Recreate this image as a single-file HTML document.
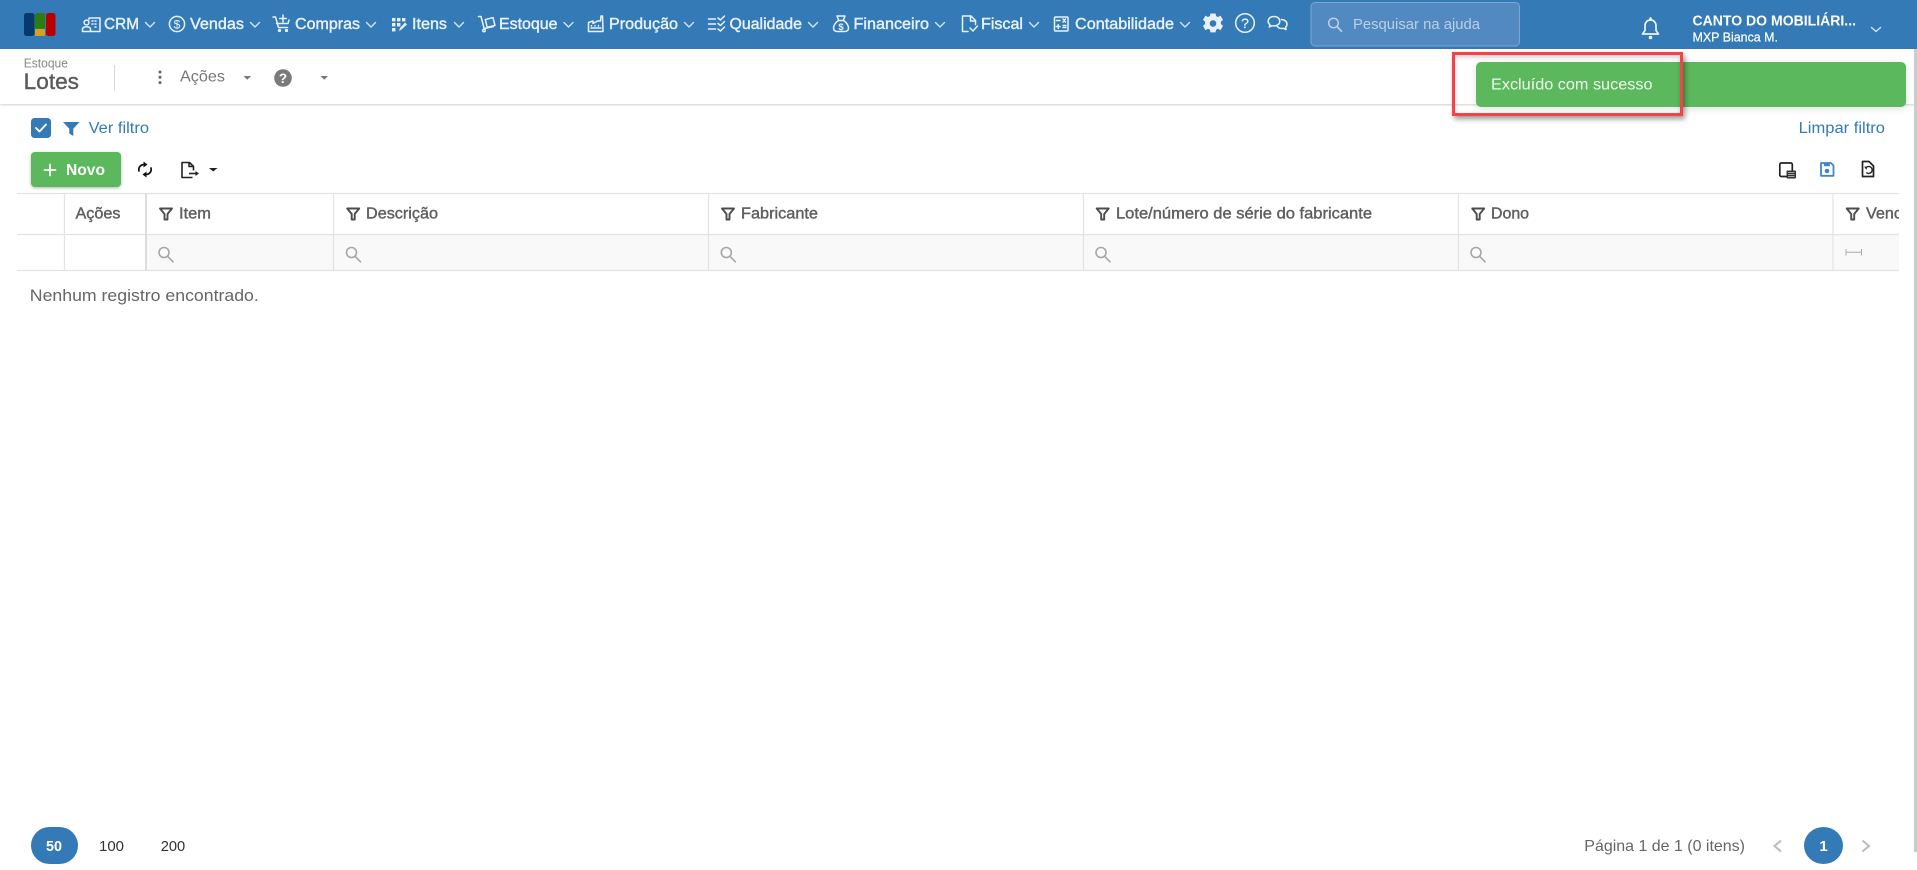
<!DOCTYPE html>
<html lang="pt-BR"><head><meta charset="utf-8"><title>Lotes</title>
<style>
html,body{margin:0;padding:0;width:1917px;height:870px;overflow:hidden;background:#fff}
body{position:relative;font-family:"Liberation Sans",Arial,sans-serif}
.hd{position:absolute;left:0;top:0;width:1917px;height:49px;background:#337ab7;box-shadow:0 1px 3px rgba(0,0,0,.35)}
.sub{position:absolute;left:0;top:49px;width:1917px;height:55px;background:#fff;box-shadow:0 1px 2px rgba(0,0,0,.18)}
.sb{position:absolute;left:1914px;top:49px;width:3px;height:803px;background:#ccc}
svg.m{position:absolute;left:0;top:0}
.toast{position:absolute;left:1476px;top:62px;width:430px;height:45px;border-radius:5px;background:#5cb85c;box-shadow:0 2px 8px rgba(0,0,0,.12)}
.red{position:absolute;left:1452px;top:52px;width:225px;height:58px;border:3px solid #f44246;box-shadow:2px 3px 5px rgba(0,0,0,.4),inset 0 2px 4px rgba(0,0,0,.2)}
.novo{position:absolute;left:31px;top:152px;width:90px;height:35px;border-radius:4px;background:#5cb85c;box-shadow:0 1px 3px rgba(0,0,0,.3)}
.pill{position:absolute;left:31px;top:827px;width:47px;height:37px;border-radius:18.5px;background:#337ab7}
.circ{position:absolute;left:1804px;top:827px;width:39px;height:37px;border-radius:50%;background:#337ab7}
text{font-family:"Liberation Sans",Arial,sans-serif}
.n{font-size:15.5px;fill:#e9f1f8;stroke:#e9f1f8;stroke-width:.4}
.i{fill:none;stroke:#e9f1f8;stroke-width:1.5;stroke-linecap:round;stroke-linejoin:round}
.c{fill:none;stroke:#d7e5f1;stroke-width:1.4;stroke-linecap:round;stroke-linejoin:round}
.th{font-size:15.5px;fill:#5f5f5f;stroke:#5f5f5f;stroke-width:.4}
.f{fill:none;stroke:#4d4d4d;stroke-width:1.9;stroke-linejoin:round;stroke-linecap:round}
.s{fill:none;stroke:#a6a6a6;stroke-width:1.6;stroke-linecap:round}
.l{stroke:#e3e3e3;stroke-width:1.2}
</style></head><body>
<div class="hd"></div>
<div class="sub"></div>
<div class="sb"></div>
<div class="novo"></div>
<div class="pill"></div>
<div class="circ"></div>
<svg class="m" width="1917" height="870" viewBox="0 0 1917 870">
<!-- logo -->
<rect x="24" y="13" width="10.5" height="23" rx="2.5" fill="#063a6e"/>
<rect x="35" y="13" width="10" height="15.5" rx="2" fill="#2d7d0e"/>
<rect x="35" y="29" width="10" height="7" rx="1" fill="#d9a01c"/>
<rect x="46" y="13" width="9.5" height="23" rx="2.5" fill="#b80000"/>

<!-- nav: CRM -->
<g class="i"><path d="M89 19.5V18h11v13.5H91"/><path d="M92 21h1M95 21h1M92 24h1M95 24h1M95 27h1"/><circle cx="86.5" cy="22.5" r="2.4"/><path d="M82.5 31.5v-2.2c0-1.6 1.5-2.6 4-2.6s4 1 4 2.6v2.2z"/></g>
<text class="n" x="104" y="29" textLength="35" lengthAdjust="spacingAndGlyphs">CRM</text>
<path class="c" d="M145.500 22.500l4.500 4.500 4.500-4.500"/>
<!-- Vendas -->
<circle class="i" cx="177" cy="24" r="7.6"/>
<text x="177" y="28.300" text-anchor="middle" font-size="12" fill="#e9f1f8">$</text>
<text class="n" x="190" y="29" textLength="54" lengthAdjust="spacingAndGlyphs">Vendas</text>
<path class="c" d="M250.500 22.500l4.500 4.500 4.500-4.500"/>
<!-- Compras -->
<g class="i"><path d="M273 17h2.500l3 10.500h9"/><path d="M276.500 23.500h11.500l1-3.500"/><path d="M283 15v7M279.700 18.500h6.600"/><circle cx="279.500" cy="30.500" r=".9"/><circle cx="286.500" cy="30.500" r=".9"/></g>
<text class="n" x="295" y="29" textLength="65" lengthAdjust="spacingAndGlyphs">Compras</text>
<path class="c" d="M366.500 22.500l4.500 4.500 4.500-4.500"/>
<!-- Itens -->
<g fill="#e9f1f8"><rect x="392" y="18" width="3.400" height="3.400"/><rect x="397" y="18" width="3.400" height="3.400"/><rect x="402" y="18" width="3.400" height="3.400"/><rect x="392" y="23" width="3.400" height="3.400"/><rect x="397" y="23" width="3.400" height="3.400"/><rect x="392" y="28" width="3.400" height="3.400"/></g>
<path d="M399 31l1-3 5-5.500 2 2-5.500 5z" fill="#e9f1f8"/>
<text class="n" x="412" y="29" textLength="35" lengthAdjust="spacingAndGlyphs">Itens</text>
<path class="c" d="M454.500 22.500l4.500 4.500 4.500-4.500"/>
<!-- Estoque -->
<g class="i"><path d="M478.500 16.500h2.500l3 11.500"/><rect x="486" y="18.500" width="8" height="8" transform="rotate(-14 490 22)"/><path d="M484.500 28.500l9-2"/><circle cx="484" cy="30.500" r="1.200"/></g>
<text class="n" x="499" y="29" textLength="58.500" lengthAdjust="spacingAndGlyphs">Estoque</text>
<path class="c" d="M564 22.500l4.500 4.500 4.500-4.500"/>
<!-- Producao -->
<g class="i"><path d="M588.500 31.500v-9l4.500-1.500v2.500l4.500-2.500 3 0 .500-5h1.500l.500 15.500z"/><path d="M591 28h10M591.500 25.500v.5M595 25.500v.5M598.500 25.500v.5"/></g>
<text class="n" x="609" y="29" textLength="69" lengthAdjust="spacingAndGlyphs">Produção</text>
<path class="c" d="M684.500 22.500l4.500 4.500 4.500-4.500"/>
<!-- Qualidade -->
<g class="i"><path d="M708.500 19h7M708.500 24h7M708.500 29h7"/><path d="M718 18l2.500 2 4-4M718 23.500l2.500 2 4-4M718 29l2.500 2 4-4"/></g>
<text class="n" x="729.500" y="29" textLength="72.500" lengthAdjust="spacingAndGlyphs">Qualidade</text>
<path class="c" d="M808.500 22.500l4.500 4.500 4.500-4.500"/>
<!-- Financeiro -->
<g class="i"><path d="M837 16h8l-1.800 4.500h-4.400z"/><path d="M838.500 20.500c-3 1.800-5 5-5 7.500 0 2.500 1.500 3.500 4 3.500h7c2.500 0 4-1 4-3.500 0-2.500-2-5.700-5-7.500"/></g>
<text x="841" y="30" text-anchor="middle" font-size="9.500" fill="#e9f1f8" font-weight="bold">$</text>
<text class="n" x="853.500" y="29" textLength="75.500" lengthAdjust="spacingAndGlyphs">Financeiro</text>
<path class="c" d="M935.500 22.500l4.500 4.500 4.500-4.500"/>
<!-- Fiscal -->
<g class="i"><path d="M968 31.500h-5.500v-15.500h8.500l4.500 4.500v4"/><path d="M970.500 16v5h5"/><path d="M970 28l3 3 4.500-5"/></g>
<text class="n" x="981" y="29" textLength="42" lengthAdjust="spacingAndGlyphs">Fiscal</text>
<path class="c" d="M1029.500 22.500l4.500 4.500 4.500-4.500"/>
<!-- Contabilidade -->
<g class="i"><rect x="1054.500" y="17" width="13.500" height="14" rx="1"/><path d="M1056.500 20.500h3.500M1063 19l2.500 3M1065.500 19l-2.500 3M1058.200 24.500v4M1056.300 26.500h3.700M1063 25.500h3M1063 27.500h3"/></g>
<text class="n" x="1075" y="29" textLength="99" lengthAdjust="spacingAndGlyphs">Contabilidade</text>
<path class="c" d="M1180.500 22.500l4.500 4.500 4.500-4.500"/>
<!-- gear -->
<g fill="#e9f1f8"><path fill-rule="evenodd" d="M1210.500 13.500h5l.7 2.700 1.900.8 2.400-1.400 2.500 4.300-2.100 1.900v2.200l2.100 1.900-2.500 4.300-2.400-1.400-1.900.8-.7 2.800h-5l-.7-2.800-1.900-.8-2.400 1.400-2.500-4.300 2.100-1.900v-2.200l-2.100-1.900 2.500-4.300 2.400 1.400 1.900-.8zM1213 20.200a3.300 3.300 0 1 0 .01 0z"/></g>
<!-- help -->
<circle cx="1245" cy="23" r="9.300" fill="none" stroke="#e9f1f8" stroke-width="1.500"/>
<text x="1245" y="28" text-anchor="middle" font-size="14" fill="#e9f1f8" stroke="#e9f1f8" stroke-width=".3">?</text>
<!-- chat -->
<g class="i"><path d="M1274 16.500c-3.500 0-5.800 2-5.800 4.700 0 1.500.7 2.700 1.800 3.500l-.7 2.300 2.800-1.300c.6.200 1.200.2 1.900.2 3.500 0 5.800-2.100 5.800-4.700s-2.300-4.700-5.800-4.700z"/><path d="M1281.500 19.500c3.500.5 5.500 2.300 5.500 4.700 0 1.200-.5 2.300-1.500 3.100l.6 2.200-2.800-1.200c-2.700.5-5.200-.4-6.300-2.300"/></g>
<!-- search box -->
<rect x="1311" y="2.500" width="208.500" height="43.500" rx="4" fill="#5289c0" stroke="#7ba7d0" stroke-width="1"/>
<circle cx="1333.500" cy="23" r="4.800" fill="none" stroke="#b9d0e6" stroke-width="1.500"/><path d="M1337 26.500l4.500 4.800" stroke="#b9d0e6" stroke-width="1.700" stroke-linecap="round"/>
<text x="1353" y="29" font-size="15" fill="#b9d0e6" textLength="127" lengthAdjust="spacingAndGlyphs">Pesquisar na ajuda</text>
<!-- bell -->
<g fill="none" stroke="#eef4f9" stroke-width="1.700" stroke-linejoin="round"><path d="M1650.500 20c-3.400 0-5.500 2.500-5.500 6v4.500l-2.500 3.500h16l-2.500-3.500V26c0-3.500-2.100-6-5.500-6z"/></g>
<circle cx="1650.500" cy="18.500" r="1.300" fill="#eef4f9"/><circle cx="1650.500" cy="37.500" r="1.800" fill="#eef4f9"/>
<text x="1692.500" y="25.700" font-size="14.500" font-weight="bold" fill="#fff" textLength="163.500" lengthAdjust="spacingAndGlyphs">CANTO DO MOBILIÁRI...</text>
<text x="1692.500" y="41.700" font-size="13" fill="#fff" stroke="#fff" stroke-width=".2" textLength="85.500" lengthAdjust="spacingAndGlyphs">MXP Bianca M.</text>
<path class="c" d="M1871.500 27.500l4.500 4 4.500-4"/>

<!-- subheader -->
<text x="23.700" y="67.500" font-size="12.500" fill="#888" textLength="44.300" lengthAdjust="spacingAndGlyphs">Estoque</text>
<text x="23.700" y="89" font-size="22.500" fill="#5b5b5b" stroke="#5b5b5b" stroke-width=".4" textLength="55.300" lengthAdjust="spacingAndGlyphs">Lotes</text>
<rect x="114" y="65" width="1" height="26" fill="#d3dae2"/>
<circle cx="160" cy="72" r="1.500" fill="#666"/><circle cx="160" cy="77.300" r="1.500" fill="#666"/><circle cx="160" cy="82.600" r="1.500" fill="#666"/>
<text x="180" y="81.700" font-size="16" fill="#777" textLength="45" lengthAdjust="spacingAndGlyphs">Ações</text>
<path d="M243.500 76h7.500l-3.750 3.700z" fill="#777"/>
<circle cx="283" cy="78" r="8.800" fill="#7a7a7a"/>
<text x="283" y="83" text-anchor="middle" font-size="13.500" font-weight="bold" fill="#fff">?</text>
<path d="M320.500 76h7.500l-3.750 3.700z" fill="#777"/>

<!-- filter row -->
<rect x="31" y="118" width="20" height="20" rx="3.500" fill="#337ab7"/>
<path d="M36 128l3.500 3.500 6.500-7" fill="none" stroke="#fff" stroke-width="1.800" stroke-linecap="round" stroke-linejoin="round"/>
<path d="M63 122h16.500l-6.200 6.800v7.200l-4-2.500v-4.700z" fill="#337ab7"/>
<text x="88.600" y="133" font-size="15.500" fill="#337ab7" textLength="60.400" lengthAdjust="spacingAndGlyphs">Ver filtro</text>
<text x="1798.600" y="133" font-size="15.500" fill="#337ab7" textLength="86.400" lengthAdjust="spacingAndGlyphs">Limpar filtro</text>

<!-- novo -->
<path d="M50 164.500v11M44.500 170h11" stroke="#fff" stroke-width="1.800" stroke-linecap="round"/>
<text x="66" y="175" font-size="15.500" font-weight="bold" fill="#fff" textLength="39" lengthAdjust="spacingAndGlyphs">Novo</text>
<!-- refresh -->
<g fill="none" stroke="#111" stroke-width="1.700" stroke-linecap="round"><path d="M139 171c-.8-3.700 1.500-6.300 5-6.500"/><path d="M151 168c.8 3.700-1.500 6.300-5 6.500"/></g>
<path d="M143.500 161.500l4 3-4 3zM146.500 171.500l-4 3 4 3z" fill="#111"/>
<!-- export -->
<g fill="none" stroke="#222" stroke-width="1.600" stroke-linejoin="round"><path d="M192.500 177.500h-10.500v-15h7.500l4 4v4"/><path d="M189 162.500v4h4.500"/><path d="M189 173.500h8"/></g><path d="M195.500 171l3.500 2.500-3.500 2.500z" fill="#222"/>
<path d="M209 168h8.500l-4.250 3.500z" fill="#222"/>
<!-- right icons -->
<rect x="1779.800" y="163" width="12.500" height="13.500" rx="1.500" fill="none" stroke="#222" stroke-width="1.700"/>
<rect x="1786.500" y="170.500" width="9.500" height="8" rx="1" fill="#333"/><path d="M1788 172.500h6.500M1788 174.500h6.500M1788 176.500h6.500" stroke="#ccc" stroke-width=".7"/>
<path d="M1821 163h10l2.500 2.500v10.300h-12.500z" fill="none" stroke="#4286c3" stroke-width="1.800" stroke-linejoin="round"/>
<rect x="1823.800" y="163" width="6" height="3.200" fill="#4286c3"/><circle cx="1827" cy="171" r="2.300" fill="#4286c3"/>
<path d="M1862.500 161.500h6.500l4.500 4.500v10.500h-11z" fill="none" stroke="#222" stroke-width="1.700" stroke-linejoin="round"/>
<path d="M1865.500 168.500a3.500 3.500 0 1 1 .8 4" fill="none" stroke="#222" stroke-width="1.400"/><path d="M1864 166.500l3.200.2-.5 3z" fill="#222"/>

<!-- table -->
<rect x="146" y="235" width="1753" height="35" fill="#f9f9f9"/>
<g class="l"><path d="M17 193.500H1899M17 234.500H1899M17 270.500H1899"/><path d="M64.500 193.500V270.500M333.500 193.500V270.500M708.500 193.500V270.500M1083.500 193.500V270.500M1458.500 193.500V270.500M1833 193.500V270.500"/></g>
<path d="M146 193.500V270.500" stroke="#ddd" stroke-width="2"/>
<text class="th" x="75.500" y="218.500" textLength="45" lengthAdjust="spacingAndGlyphs">Ações</text>
<g class="f"><path d="M160 208.500h12l-4.500 5.500v5.500h-3v-5.500z"/><path d="M347.200 208.500h12l-4.500 5.500v5.500h-3v-5.500z"/><path d="M722 208.500h12l-4.500 5.500v5.500h-3v-5.500z"/><path d="M1096.700 208.500h12l-4.500 5.500v5.500h-3v-5.500z"/><path d="M1472.200 208.500h12l-4.500 5.500v5.500h-3v-5.500z"/><path d="M1846.700 208.500h12l-4.500 5.500v5.500h-3v-5.500z"/></g>
<text class="th" x="179" y="218.500" textLength="32" lengthAdjust="spacingAndGlyphs">Item</text>
<text class="th" x="366" y="218.500" textLength="72" lengthAdjust="spacingAndGlyphs">Descrição</text>
<text class="th" x="741" y="218.500" textLength="77" lengthAdjust="spacingAndGlyphs">Fabricante</text>
<text class="th" x="1116" y="218.500" textLength="256" lengthAdjust="spacingAndGlyphs">Lote/número de série do fabricante</text>
<text class="th" x="1491" y="218.500" textLength="38" lengthAdjust="spacingAndGlyphs">Dono</text>
<svg x="1840" y="195" width="59" height="35" viewBox="1840 195 59 35"><text class="th" x="1866" y="218.500" textLength="36" lengthAdjust="spacingAndGlyphs">Venc</text></svg>
<g class="s"><circle cx="164" cy="252.500" r="5"/><path d="M167.800 256.500l5.200 5.300"/><circle cx="351.500" cy="252.500" r="5"/><path d="M355.300 256.500l5.200 5.300"/><circle cx="726.300" cy="252.500" r="5"/><path d="M730.100 256.500l5.200 5.300"/><circle cx="1101" cy="252.500" r="5"/><path d="M1104.800 256.500l5.200 5.300"/><circle cx="1476" cy="252.500" r="5"/><path d="M1479.800 256.500l5.200 5.300"/></g>
<path d="M1846 249v6.500M1861.500 249v6.500M1846 252.300h15.500" stroke="#aaa" stroke-width="1" fill="none"/>
<text x="29.800" y="301" font-size="16.500" fill="#666" textLength="229" lengthAdjust="spacingAndGlyphs">Nenhum registro encontrado.</text>

<!-- pagination -->
<text x="46" y="851" font-size="15" font-weight="bold" fill="#fff" textLength="16" lengthAdjust="spacingAndGlyphs">50</text>
<text x="99" y="851" font-size="15" fill="#333" textLength="25" lengthAdjust="spacingAndGlyphs">100</text>
<text x="160.700" y="851" font-size="15" fill="#333" textLength="24.500" lengthAdjust="spacingAndGlyphs">200</text>
<text x="1584.300" y="851" font-size="16" fill="#666" textLength="160.700" lengthAdjust="spacingAndGlyphs">Página 1 de 1 (0 itens)</text>
<path d="M1781 840.500l-6.500 5.500 6.500 5.500" fill="none" stroke="#bbb" stroke-width="2"/>
<text x="1823.500" y="851" text-anchor="middle" font-size="15" font-weight="bold" fill="#fff">1</text>
<path d="M1862.500 840.500l6.500 5.500-6.500 5.500" fill="none" stroke="#bbb" stroke-width="2"/>
</svg>
<div class="toast"></div>
<div class="red"></div>
<svg class="m" width="1917" height="870" viewBox="0 0 1917 870" style="pointer-events:none">
<text x="1491" y="89.300" font-size="15.500" fill="#f0f8ee" textLength="161.500" lengthAdjust="spacingAndGlyphs">Excluído com sucesso</text>
</svg>
</body></html>
